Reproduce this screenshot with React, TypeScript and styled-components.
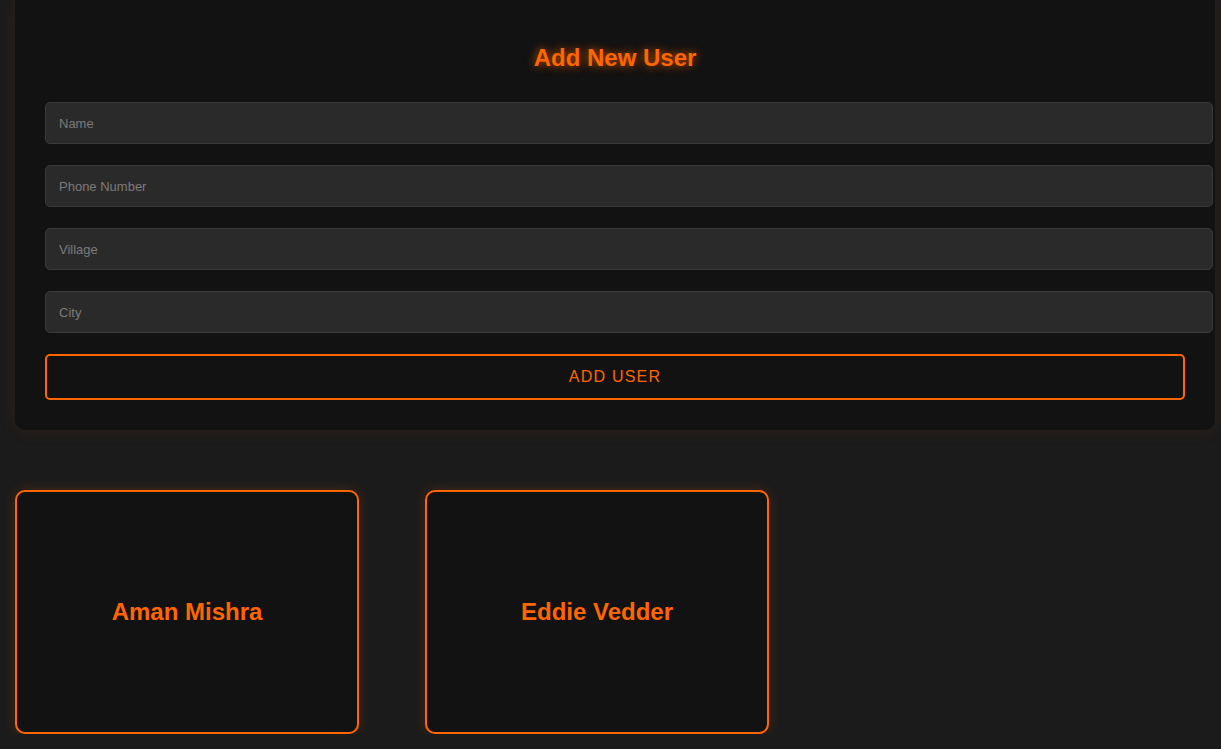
import React from "react";
import styled, { createGlobalStyle } from "styled-components";

const Global = createGlobalStyle`
  html, body { margin: 0; padding: 0; background: #1b1b1b; }
  body { font-family: "Liberation Sans", Arial, sans-serif; color: #eee; }
  * { box-sizing: content-box; }
`;

const Page = styled.div`
  padding: 0 6px 0 15px;
  display: flex;
  flex-direction: column;
  gap: 60px;
`;

const FormCard = styled.div`
  width: 1140px;
  padding: 44px 30px 30px;
  background: #121212;
  border-radius: 0 0 10px 10px;
  box-shadow: 0 0 20px rgba(255, 102, 0, 0.08);
  display: flex;
  flex-direction: column;
`;

const Title = styled.h2`
  margin: 0 0 30px;
  text-align: center;
  font-size: 24px;
  line-height: 28px;
  font-weight: 700;
  color: #ff6600;
  text-shadow: 0 0 10px rgba(255, 102, 0, 0.8);
`;

const Fields = styled.div`
  display: flex;
  flex-direction: column;
  gap: 21px;
`;

const Input = styled.input`
  display: block;
  width: 100%;
  height: 40px;
  padding: 0 13px;
  margin: 0;
  background: #2a2a2a;
  border: 1px solid #3a3a3a;
  border-radius: 5px;
  color: #ddd;
  font-family: "Liberation Sans", Arial, sans-serif;
  font-size: 13px;
  outline: none;
  &::placeholder { color: #7a7a7a; }
`;

const Button = styled.button`
  display: block;
  width: 1136px;
  height: 42px;
  padding: 0;
  margin: 0;
  background: #121212;
  border: 2px solid #ff6600;
  border-radius: 5px;
  color: #ff6600;
  font-family: "Liberation Sans", Arial, sans-serif;
  font-size: 16px;
  letter-spacing: 1.2px;
  text-transform: uppercase;
  cursor: pointer;
`;

const Cards = styled.div`
  display: flex;
  gap: 66px;
`;

const UserCard = styled.div`
  width: 340px;
  height: 240px;
  background: #121212;
  border: 2px solid #ff6600;
  border-radius: 10px;
  box-shadow: 0 0 14px rgba(255, 102, 0, 0.18);
  display: flex;
  align-items: center;
  justify-content: center;
`;

const UserName = styled.h3`
  margin: 0;
  font-size: 24px;
  font-weight: 700;
  color: #ff6600;
`;

const users = ["Aman Mishra", "Eddie Vedder"];

export default function App() {
  return (
    <>
      <Global />
      <Page>
        <FormCard>
          <Title>Add New User</Title>
          <Fields>
            <Input placeholder="Name" />
            <Input placeholder="Phone Number" />
            <Input placeholder="Village" />
            <Input placeholder="City" />
            <Button>Add User</Button>
          </Fields>
        </FormCard>
        <Cards>
          {users.map((u) => (
            <UserCard key={u}>
              <UserName>{u}</UserName>
            </UserCard>
          ))}
        </Cards>
      </Page>
    </>
  );
}
